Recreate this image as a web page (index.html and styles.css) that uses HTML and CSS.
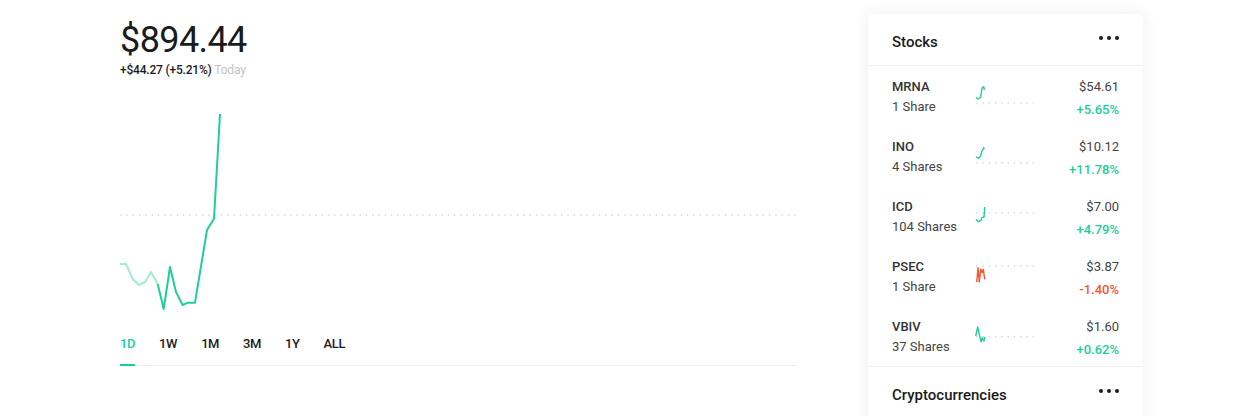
FILE: index.html
```html
<!DOCTYPE html>
<html>

<head>
    <meta charset="utf-8" />
    <title>Portfolio</title>
    <link rel="stylesheet" href="styles.css">
</head>

<body>
    <div class="page">
        <div class="main">
            <div class="value">$894.44</div>
            <div class="change">+$44.27 (+5.21%) <span class="muted">Today</span></div>
            <svg class="chart" width="678" height="220" viewBox="0 0 678 220">
                <line x1="1" y1="114" x2="678" y2="114" stroke="#d8d8d8" stroke-width="1.5" stroke-dasharray="1.5 4.8" />
                <polyline fill="none" stroke="#a3ecd2" stroke-width="2" stroke-linejoin="round"
                    points="1,163 7,163 13.7,178 20,184 26,181 32,171 38.7,183" />
                <polyline fill="none" stroke="#21ce99" stroke-width="2" stroke-linejoin="round"
                    points="38.7,183 44.7,208 51,166 57,191 63.7,204 69,201.7 76,201.7 88,129 95,117.7 101,13" />
            </svg>
            <div class="tabs">
                <div class="tab active">1D</div>
                <div class="tab">1W</div>
                <div class="tab">1M</div>
                <div class="tab">3M</div>
                <div class="tab">1Y</div>
                <div class="tab">ALL</div>
            </div>
        </div>

        <div class="card">
            <div class="card-head">
                <span>Stocks</span>
                <svg class="more" width="20" height="4" viewBox="0 0 20 4">
                    <circle cx="2" cy="2" r="2" /><circle cx="10" cy="2" r="2" /><circle cx="18" cy="2" r="2" />
                </svg>
            </div>
            <div class="rows">
                <div class="row">
                    <div class="name"><b>MRNA</b><span>1 Share</span></div>
                    <svg class="spark" width="60" height="40" viewBox="0 0 60 40">
                        <line x1="1" y1="27" x2="59" y2="27" class="base" />
                        <polyline class="up" points="1,21.7 3,23 5.7,21 7,12 8.7,10.7 9.3,14" />
                    </svg>
                    <div class="price"><span>$54.61</span><b class="up-text">+5.65%</b></div>
                </div>
                <div class="row">
                    <div class="name"><b>INO</b><span>4 Shares</span></div>
                    <svg class="spark" width="60" height="40" viewBox="0 0 60 40">
                        <line x1="1" y1="26.7" x2="59" y2="26.7" class="base" />
                        <polyline class="up" points="1,20.7 3.3,22.3 5.7,20 7,15 8.7,11.7 9.3,13" />
                    </svg>
                    <div class="price"><span>$10.12</span><b class="up-text">+11.78%</b></div>
                </div>
                <div class="row">
                    <div class="name"><b>ICD</b><span>104 Shares</span></div>
                    <svg class="spark" width="60" height="40" viewBox="0 0 60 40">
                        <line x1="1" y1="16.7" x2="59" y2="16.7" class="base" />
                        <polyline class="up" points="1,23.3 3.3,25.7 6,24.3 7,21.7 9,21 9.7,11" />
                    </svg>
                    <div class="price"><span>$7.00</span><b class="up-text">+4.79%</b></div>
                </div>
                <div class="row">
                    <div class="name"><b>PSEC</b><span>1 Share</span></div>
                    <svg class="spark" width="60" height="40" viewBox="0 0 60 40">
                        <line x1="1" y1="10" x2="59" y2="10" class="base" />
                        <polyline class="down" points="1.7,26 3,11.7 4.3,26 5.7,13.3 7,16.7 8.3,13.3 9.7,23.3" />
                    </svg>
                    <div class="price"><span>$3.87</span><b class="down-text">-1.40%</b></div>
                </div>
                <div class="row">
                    <div class="name"><b>VBIV</b><span>37 Shares</span></div>
                    <svg class="spark" width="60" height="40" viewBox="0 0 60 40">
                        <line x1="1" y1="20.7" x2="59" y2="20.7" class="base" />
                        <polyline class="up" points="0.7,20 2.7,11 4.3,18.3 6,25.7 7.3,21.7 9,25 10,21" />
                    </svg>
                    <div class="price"><span>$1.60</span><b class="up-text">+0.62%</b></div>
                </div>
            </div>
            <div class="card-head">
                <span>Cryptocurrencies</span>
                <svg class="more" width="20" height="4" viewBox="0 0 20 4">
                    <circle cx="2" cy="2" r="2" /><circle cx="10" cy="2" r="2" /><circle cx="18" cy="2" r="2" />
                </svg>
            </div>
        </div>
    </div>
</body>

</html>
```

FILE: styles.css
```css
* {
    margin: 0;
    padding: 0;
    box-sizing: border-box;
}

body {
    background: #fff;
    color: #1b1b1d;
    font-family: Roboto, "Liberation Sans", sans-serif;
    overflow: hidden;
}

.page {
    display: flex;
    align-items: flex-start;
    padding: 14px 0 0 120px;
}

.main {
    width: 677px;
}

.value {
    font-size: 36px;
    line-height: 44px;
    margin-top: 4px;
    letter-spacing: -0.6px;
}

.change {
    font-size: 12px;
    line-height: 16px;
    font-weight: 500;
    letter-spacing: -0.2px;
}

.change .muted {
    color: #c3c3c3;
    font-weight: 400;
}

.chart {
    display: block;
    margin-left: -1px;
    margin-top: 23px;
}

.tabs {
    display: flex;
    gap: 24px;
    margin-top: 3px;
    border-bottom: 1px solid #eee;
}

.tab {
    font-size: 13px;
    font-weight: 500;
    line-height: 20px;
    letter-spacing: -0.4px;
    padding: 10px 0 10px;
    margin-bottom: -1px;
    border-bottom: 2px solid transparent;
}

.tab.active {
    color: #21ce99;
    border-bottom-color: #21ce99;
}

.card {
    width: 275px;
    margin-left: 71px;
    height: 420px;
    background: #fff;
    border-radius: 4px;
    box-shadow: 0 0 18px rgba(0, 0, 0, 0.07);
}

.card-head {
    height: 51px;
    padding: 4px 24px 0;
    display: flex;
    align-items: center;
    justify-content: space-between;
    font-size: 15px;
    font-weight: 500;
    color: #1b1b1d;
}

.card-head .more {
    fill: #1b1b1d;
    margin-top: -8px;
}

.rows {
    border-top: 1px solid #efefef;
    border-bottom: 1px solid #efefef;
}

.row {
    height: 60px;
    padding: 11px 24px 0;
    display: flex;
    align-items: flex-start;
    font-size: 13px;
    line-height: 20px;
}

.name {
    width: 83px;
    display: flex;
    flex-direction: column;
}

.name b {
    font-weight: 500;
    color: #333;
}

.name span {
    color: #444;
}

.spark {
    display: block;
    margin-top: -1px;
}

.spark .base {
    stroke: #dcdcdc;
    stroke-width: 1.5;
    stroke-dasharray: 1.5 4.8;
}

.spark polyline {
    fill: none;
    stroke-width: 1.4;
    stroke-linejoin: round;
}

.spark .up {
    stroke: #21ce99;
}

.spark .down {
    stroke: #f45531;
}

.price {
    flex: 1;
    display: flex;
    flex-direction: column;
    align-items: flex-end;
    color: #444;
}

.price b {
    margin-top: 3px;
    font-weight: 500;
}

.up-text {
    color: #21ce99;
}

.down-text {
    color: #f45531;
}
```
